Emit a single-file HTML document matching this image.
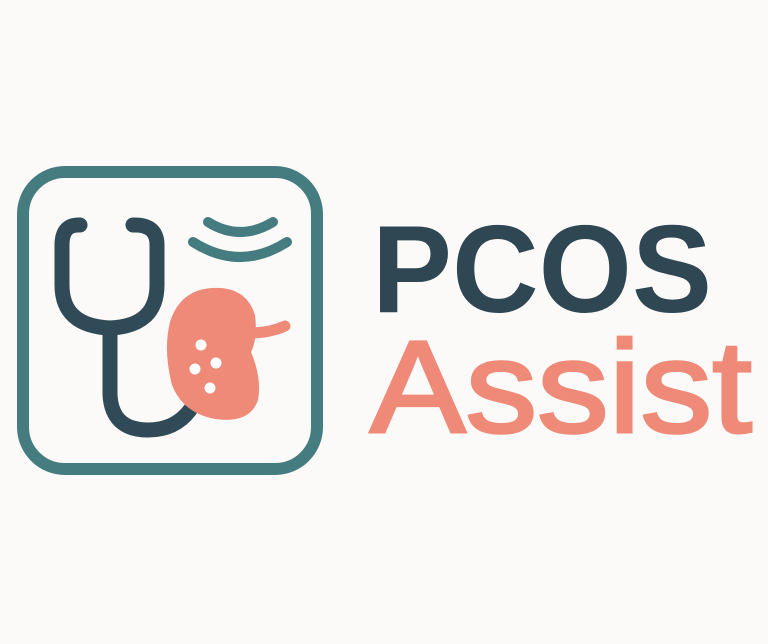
<!DOCTYPE html>
<html><head><meta charset="utf-8"><style>
html,body{margin:0;padding:0;background:#fcfaf8;}
svg{display:block}
</style></head><body>
<svg width="768" height="644" viewBox="0 0 768 644" xmlns="http://www.w3.org/2000/svg">
<rect width="768" height="644" fill="#fcfaf8"/>
<rect x="23" y="172" width="294" height="297" rx="42" fill="none" stroke="#457c80" stroke-width="12"/>
<path d="M208 222 Q240 242 273 222" fill="none" stroke="#457c80" stroke-width="10" stroke-linecap="round"/>
<path d="M193 242 Q240 272 287 242" fill="none" stroke="#457c80" stroke-width="10" stroke-linecap="round"/>
<path d="M80 225 Q62 224 62 245 L62 285 Q62 326 110 328 Q157 326 157 285 L157 245 Q157 224 133 225" fill="none" stroke="#304b57" stroke-width="15" stroke-linecap="round" stroke-linejoin="round"/>
<path d="M110 328 L110 395 Q112 430 148 430 Q175 430 190 410" fill="none" stroke="#304b57" stroke-width="15" stroke-linecap="round"/>
<path d="M212 288 Q246 286 255 315 Q258 338 251 352 Q262 378 258 400 Q250 424 215 419 Q183 413 172 385 Q163 350 170 322 Q180 290 212 288 Z" fill="#ef8a78"/>
<path d="M254 333 Q272 332 285 326" fill="none" stroke="#ef8a78" stroke-width="11" stroke-linecap="round"/>
<circle cx="201" cy="345" r="5.5" fill="#fff"/>
<circle cx="216" cy="363" r="5.5" fill="#fff"/>
<circle cx="195" cy="369" r="5.5" fill="#fff"/>
<circle cx="210" cy="388" r="5.5" fill="#fff"/>
<text x="372" y="312" font-family="Liberation Sans, sans-serif" font-weight="bold" font-size="124" fill="#2f4753" textLength="340" lengthAdjust="spacingAndGlyphs">PCOS</text>
<text x="370" y="432" font-family="Liberation Sans, sans-serif" font-size="131" fill="#ef8a78" stroke="#ef8a78" stroke-width="3" textLength="382" lengthAdjust="spacingAndGlyphs">Assist</text>
</svg>
</body></html>
